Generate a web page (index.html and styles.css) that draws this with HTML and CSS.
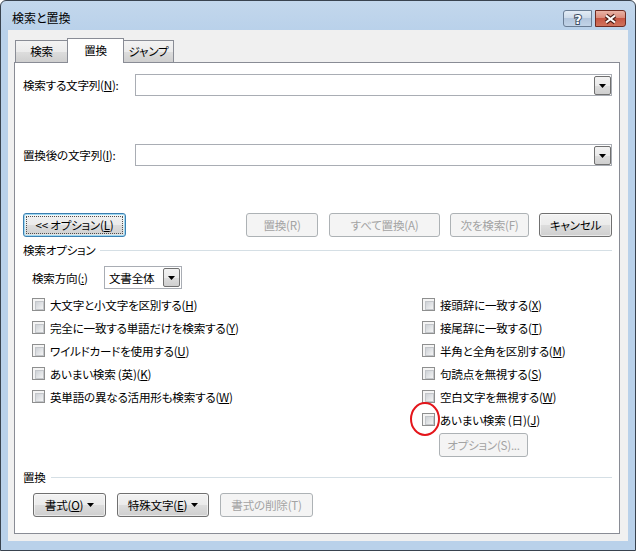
FILE: index.html
```html
<!DOCTYPE html>
<html lang="ja">
<head>
<meta charset="utf-8">
<title>検索と置換</title>
<link rel="stylesheet" href="styles.css">
</head>
<body>
<div class="window">
  <div class="titlebar">
    <span class="title">検索と置換</span>
    <div class="caption-btns">
      <div class="cbtn help"><svg width="14" height="15" viewBox="0 0 14 15"><text x="7" y="12.5" text-anchor="middle" class="qmark">?</text></svg></div>
      <div class="cbtn close"><svg width="17" height="12" viewBox="0 0 17 12"><path d="M4 2.5L13 9.5M13 2.5L4 9.5" class="x-out"/><path d="M4 2.5L13 9.5M13 2.5L4 9.5" class="x-in"/></svg></div>
    </div>
  </div>
  <div class="client">
    <div class="tabs">
      <div class="tab t1">検索</div>
      <div class="tab t2 active">置換</div>
      <div class="tab t3">ジャンプ</div>
    </div>
    <div class="panel">
      <div class="field-row r1">
        <span class="field-label">検索する文字列(<u>N</u>):</span>
        <div class="combo wide"><span class="combo-btn"><svg width="7" height="4" viewBox="0 0 7 4"><path d="M0 0H7L3.5 4Z"/></svg></span></div>
      </div>
      <div class="field-row r2">
        <span class="field-label">置換後の文字列(<u>I</u>):</span>
        <div class="combo wide"><span class="combo-btn"><svg width="7" height="4" viewBox="0 0 7 4"><path d="M0 0H7L3.5 4Z"/></svg></span></div>
      </div>
      <div class="btn-row">
        <div class="btn focus b-opt"><span>&lt;&lt; オプション(<u>L</u>)</span></div>
        <div class="btn dis b-rep">置換(R)</div>
        <div class="btn dis b-all">すべて置換(A)</div>
        <div class="btn dis b-next">次を検索(F)</div>
        <div class="btn b-cancel">キャンセル</div>
      </div>
      <div class="group-head g1"><span>検索オプション</span><i class="line"></i></div>
      <div class="dir-row">
        <span class="dir-label">検索方向(<u>:</u>)</span>
        <div class="combo small"><span class="combo-text">文書全体</span><span class="combo-btn"><svg width="7" height="4" viewBox="0 0 7 4"><path d="M0 0H7L3.5 4Z"/></svg></span></div>
      </div>
      <div class="opts">
        <div class="col left">
          <div class="check"><i class="cb"></i><span>大文字と小文字を区別する(<u>H</u>)</span></div>
          <div class="check"><i class="cb"></i><span>完全に一致する単語だけを検索する(<u>Y</u>)</span></div>
          <div class="check"><i class="cb"></i><span>ワイルドカードを使用する(<u>U</u>)</span></div>
          <div class="check"><i class="cb"></i><span>あいまい検索 (英)(<u>K</u>)</span></div>
          <div class="check"><i class="cb"></i><span>英単語の異なる活用形も検索する(<u>W</u>)</span></div>
        </div>
        <div class="col right">
          <div class="check"><i class="cb"></i><span>接頭辞に一致する(<u>X</u>)</span></div>
          <div class="check"><i class="cb"></i><span>接尾辞に一致する(<u>T</u>)</span></div>
          <div class="check"><i class="cb"></i><span>半角と全角を区別する(<u>M</u>)</span></div>
          <div class="check"><i class="cb"></i><span>句読点を無視する(<u>S</u>)</span></div>
          <div class="check"><i class="cb"></i><span>空白文字を無視する(<u>W</u>)</span></div>
          <div class="check marked"><i class="cb"><b class="ring"></b></i><span>あいまい検索 (日)(<u>J</u>)</span></div>
          <div class="btn dis b-sub">オプション(S)...</div>
        </div>
      </div>
      <div class="group-head g2"><span>置換</span><i class="line"></i></div>
      <div class="bottom-row">
        <div class="btn b-fmt">書式(<u>O</u>)<svg class="dd" width="7" height="4" viewBox="0 0 7 4"><path d="M0 0H7L3.5 4Z"/></svg></div>
        <div class="btn b-spc">特殊文字(<u>E</u>)<svg class="dd" width="7" height="4" viewBox="0 0 7 4"><path d="M0 0H7L3.5 4Z"/></svg></div>
        <div class="btn dis b-clr">書式の削除(T)</div>
      </div>
    </div>
  </div>
</div>
</body>
</html>
```
FILE: styles.css
```css
* { box-sizing: border-box; }
html, body { margin: 0; padding: 0; }
body {
  width: 636px;
  height: 551px;
  overflow: hidden;
  background: #ffffff;
  font-family: "Noto Sans CJK JP", "Noto Sans", sans-serif;
  font-size: 11.6px;
  letter-spacing: -0.25px;
  line-height: 16px;
  color: #000;
  font-feature-settings: "palt";
}
u { text-decoration: underline; text-underline-offset: 1px; }

.window {
  width: 636px;
  height: 551px;
  border: 1px solid #39434f;
  border-radius: 6px 6px 0 0;
  background: linear-gradient(#c3d7ec 0, #b9d1ea 30px, #b9d1ea 100%);
  display: flex;
  flex-direction: column;
}

.titlebar {
  height: 29px;
  display: flex;
  align-items: flex-start;
  padding-left: 11px;
}
.title { margin-top: 9px; font-size: 12px; letter-spacing: 0; }
.caption-btns {
  margin-left: auto;
  margin-top: 9px;
  margin-right: 9px;
  display: flex;
  gap: 3px;
}
.cbtn {
  height: 17px;
  border: 1px solid #6a7d94;
  display: flex;
  align-items: center;
  justify-content: center;
}
.help {
  width: 29px;
  border-radius: 3px 0 0 3px;
  background: linear-gradient(#e3ecf6 0%, #cedbea 45%, #b3c6dd 50%, #c2d4e8 100%);
}
.close {
  width: 31px;
  border-color: #6e2b22;
  border-radius: 0 3px 3px 0;
  background: linear-gradient(#eab3a6 0%, #db8c7c 45%, #c75643 50%, #d0735d 100%);
}
.qmark {
  font-family: "DejaVu Sans", sans-serif;
  font-weight: bold;
  font-size: 13px;
  fill: #ffffff;
  stroke: #3e4f65;
  stroke-width: 2px;
  paint-order: stroke;
}
.x-out { stroke: #4b1d16; stroke-width: 4.2; fill: none; }
.x-in { stroke: #ffffff; stroke-width: 2.2; fill: none; }

.client {
  margin: 0 7px;
  height: 511px;
  background: #f0f0f0;
  display: flex;
  flex-direction: column;
}

.tabs {
  display: flex;
  align-items: flex-end;
  height: 32px;
  padding-left: 7px;
  position: relative;
  z-index: 1;
}
.tab {
  height: 22px;
  border: 1px solid #898c95;
  border-bottom: none;
  background: linear-gradient(#f3f3f3 0%, #ebebeb 50%, #dddddd 51%, #cfcfcf 100%);
  display: flex;
  align-items: center;
  justify-content: center;
  padding-bottom: 1px;
}
.t1 { width: 53px; }
.t2 { width: 57px; margin-left: -1px; }
.t3 { width: 51px; margin-left: -1px; }
.tab.active {
  height: 25px;
  margin-bottom: -1px;
  background: #ffffff;
  padding-bottom: 3px;
}

.panel {
  margin-left: 6px;
  width: 606px;
  height: 472px;
  border: 1px solid #898c95;
  background: #ffffff;
  padding: 0 7px 0 8px;
  display: flex;
  flex-direction: column;
}

.field-row {
  display: flex;
  align-items: center;
  height: 22px;
}
.r1 { margin-top: 11px; }
.r2 { margin-top: 48px; }
.field-label { width: 112px; flex: none; }

.combo {
  border: 1px solid #a9adb4;
  background: #ffffff;
  display: flex;
  align-items: stretch;
  justify-content: flex-end;
  padding: 1px;
}
.combo.wide { flex: 1; height: 22px; padding: 0; }
.combo.small { width: 78px; height: 23px; }
.combo-text { flex: 1; padding-left: 3px; display: flex; align-items: center; }
.combo-btn {
  width: 17px;
  flex: none;
  border: 1px solid #707070;
  border-radius: 2px;
  background: linear-gradient(#f2f2f2 0%, #ebebeb 50%, #dddddd 51%, #cfcfcf 100%);
  display: flex;
  align-items: center;
  justify-content: center;
}
.combo.wide .combo-btn { margin: 1px 0 0 0; }
.combo-btn path, .dd path { fill: #000; }

.btn-row {
  margin-top: 47px;
  height: 24px;
  display: flex;
}
.btn {
  height: 24px;
  border: 1px solid #707070;
  border-radius: 3px;
  background: linear-gradient(#f2f2f2 0%, #ebebeb 48%, #dddddd 50%, #cfcfcf 100%);
  box-shadow: inset 0 0 0 1px rgba(255, 255, 255, 0.55);
  display: flex;
  align-items: center;
  justify-content: center;
  color: #000;
  flex: none;
  white-space: nowrap;
}
.btn.dis {
  border-color: #adb2b5;
  background: #f4f4f4;
  box-shadow: none;
  color: #a3a3a3;
}
.btn.focus {
  border-color: #3c7fb1;
  box-shadow: inset 0 0 0 1px #9fd9f2, inset 0 0 0 2px rgba(255,255,255,0.4);
}
.btn.focus span {
  border: 1px dotted #505050;
  padding: 0 6px;
  height: 18px;
  display: flex;
  align-items: center;
  width: 97px;
  justify-content: center;
}
.b-opt { width: 103px; }
.b-rep { width: 72px; margin-left: auto; }
.b-all { width: 111px; margin-left: 11px; }
.b-next { width: 79px; margin-left: 10px; }
.b-cancel { width: 73px; margin-left: 10px; }

.group-head {
  height: 12px;
  display: flex;
  align-items: center;
}
.group-head .line {
  flex: 1;
  height: 1px;
  background: #d5dfe5;
  margin-left: 5px;
}
.g1 { margin-top: 7px; }
.g2 { margin-top: 14px; }

.dir-row {
  margin-top: 10px;
  padding-left: 9px;
  display: flex;
  align-items: center;
  height: 23px;
}
.dir-label { width: 72px; flex: none; }

.opts {
  margin-top: 4px;
  padding-left: 9px;
  display: flex;
}
.col { display: flex; flex-direction: column; }
.col.left { width: 390px; }
.check {
  height: 23px;
  display: flex;
  align-items: center;
}
.cb {
  width: 13px;
  height: 13px;
  flex: none;
  border: 1px solid #8e8f8f;
  background: #f4f4f4;
  margin-right: 5px;
  position: relative;
  padding: 2px;
  display: block;
}
.cb::before {
  content: "";
  display: block;
  width: 7px;
  height: 7px;
  border: 1px solid #c3c6ca;
  background: linear-gradient(135deg, #cdd1d6 0%, #e4e6e8 60%, #f3f3f3 100%);
}
.ring {
  position: absolute;
  left: -13px;
  top: -12px;
  width: 30px;
  height: 34px;
  border: 2px solid #e4151b;
  border-radius: 50%;
}
.b-sub { width: 89px; margin-left: 17px; margin-top: 2px; }

.bottom-row {
  margin-top: 10px;
  padding-left: 10px;
  display: flex;
  height: 24px;
}
.dd { margin-left: 4px; }
.b-fmt { width: 73px; }
.b-spc { width: 92px; margin-left: 11px; }
.b-clr { width: 93px; margin-left: 11px; }
```
